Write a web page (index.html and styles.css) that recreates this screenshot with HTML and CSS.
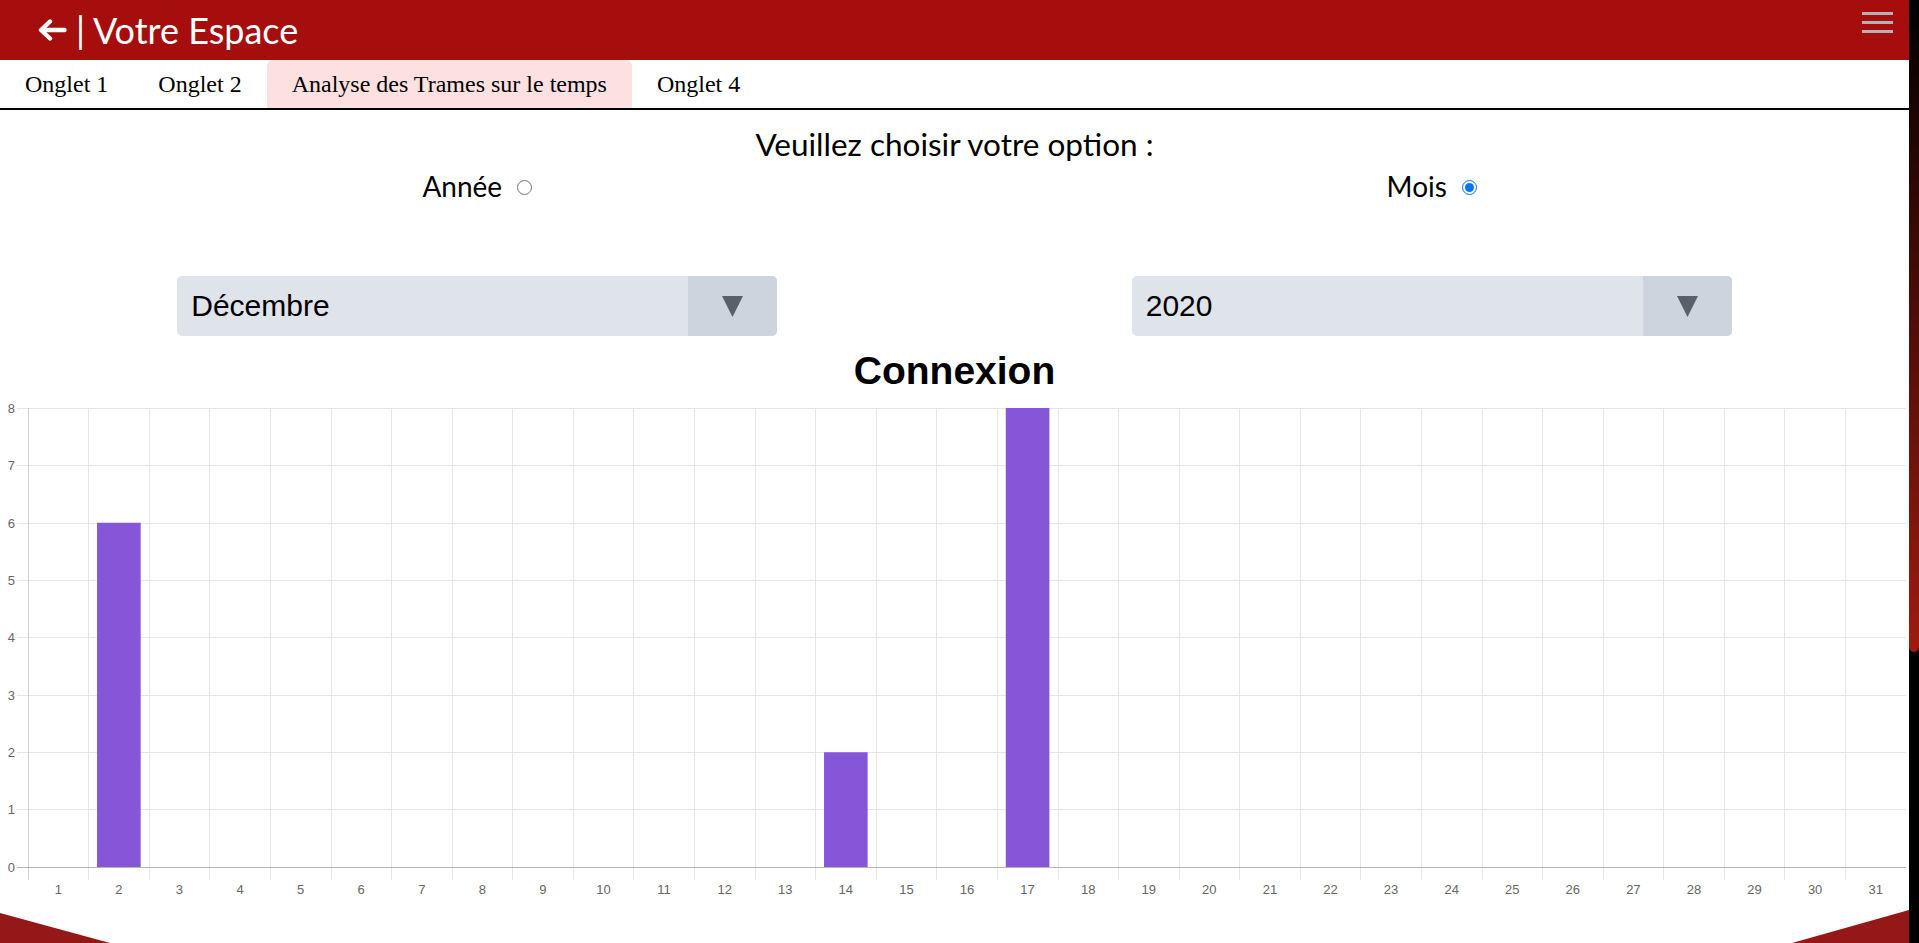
FILE: index.html
```html
<!DOCTYPE html>
<html lang="fr">
<head>
<meta charset="utf-8">
<title>Votre Espace</title>
<link rel="stylesheet" href="styles.css">
</head>
<body>
<div class="app">
  <div class="page">
    <header class="topbar">
      <svg class="back" viewBox="0 0 30 22" aria-hidden="true">
        <path d="M27.5 11H4.5M13 2.5L4 11L13 19.5" fill="none" stroke="#fff" stroke-width="4.4" stroke-linecap="round" stroke-linejoin="round"/>
      </svg>
      <span class="brand">| Votre Espace</span>
      <div class="menu"><span></span><span></span><span></span></div>
    </header>

    <nav class="tabs">
      <div class="tab">Onglet 1</div>
      <div class="tab">Onglet 2</div>
      <div class="tab active">Analyse des Trames sur le temps</div>
      <div class="tab">Onglet 4</div>
    </nav>

    <section class="options">
      <h2 class="prompt">Veuillez choisir votre option :</h2>
      <div class="choices">
        <label class="choice">Année <input type="radio" name="mode"></label>
        <label class="choice">Mois <input type="radio" name="mode" checked></label>
      </div>
      <div class="selects">
        <div class="select-cell">
          <div class="select">
            <div class="select-value">Décembre</div>
            <div class="select-arrow"><svg viewBox="0 0 21 21" class="tri"><polygon points="0,0 21,0 10.5,21" fill="#5a606b"/></svg></div>
          </div>
        </div>
        <div class="select-cell">
          <div class="select">
            <div class="select-value">2020</div>
            <div class="select-arrow"><svg viewBox="0 0 21 21" class="tri"><polygon points="0,0 21,0 10.5,21" fill="#5a606b"/></svg></div>
          </div>
        </div>
      </div>
    </section>

    <section class="chart">
      <svg class="chart-svg" width="1909" height="570" viewBox="0 0 1909 570">
        <text class="chart-title" x="954.5" y="48" text-anchor="middle">Connexion</text>
        <g class="grid-v" stroke="#e6e6e6" stroke-width="1">
          <line x1="88.5" y1="72" x2="88.5" y2="544"/>
          <line x1="149.5" y1="72" x2="149.5" y2="544"/>
          <line x1="209.5" y1="72" x2="209.5" y2="544"/>
          <line x1="270.5" y1="72" x2="270.5" y2="544"/>
          <line x1="331.5" y1="72" x2="331.5" y2="544"/>
          <line x1="391.5" y1="72" x2="391.5" y2="544"/>
          <line x1="452.5" y1="72" x2="452.5" y2="544"/>
          <line x1="512.5" y1="72" x2="512.5" y2="544"/>
          <line x1="573.5" y1="72" x2="573.5" y2="544"/>
          <line x1="633.5" y1="72" x2="633.5" y2="544"/>
          <line x1="694.5" y1="72" x2="694.5" y2="544"/>
          <line x1="755.5" y1="72" x2="755.5" y2="544"/>
          <line x1="815.5" y1="72" x2="815.5" y2="544"/>
          <line x1="876.5" y1="72" x2="876.5" y2="544"/>
          <line x1="936.5" y1="72" x2="936.5" y2="544"/>
          <line x1="997.5" y1="72" x2="997.5" y2="544"/>
          <line x1="1058.5" y1="72" x2="1058.5" y2="544"/>
          <line x1="1118.5" y1="72" x2="1118.5" y2="544"/>
          <line x1="1179.5" y1="72" x2="1179.5" y2="544"/>
          <line x1="1239.5" y1="72" x2="1239.5" y2="544"/>
          <line x1="1300.5" y1="72" x2="1300.5" y2="544"/>
          <line x1="1360.5" y1="72" x2="1360.5" y2="544"/>
          <line x1="1421.5" y1="72" x2="1421.5" y2="544"/>
          <line x1="1482.5" y1="72" x2="1482.5" y2="544"/>
          <line x1="1542.5" y1="72" x2="1542.5" y2="544"/>
          <line x1="1603.5" y1="72" x2="1603.5" y2="544"/>
          <line x1="1663.5" y1="72" x2="1663.5" y2="544"/>
          <line x1="1724.5" y1="72" x2="1724.5" y2="544"/>
          <line x1="1784.5" y1="72" x2="1784.5" y2="544"/>
          <line x1="1845.5" y1="72" x2="1845.5" y2="544"/>
        </g>
        <g class="grid-h" stroke="#e6e6e6" stroke-width="1">
          <line x1="17" y1="72.5" x2="1906" y2="72.5"/>
          <line x1="17" y1="129.5" x2="1906" y2="129.5"/>
          <line x1="17" y1="187.5" x2="1906" y2="187.5"/>
          <line x1="17" y1="244.5" x2="1906" y2="244.5"/>
          <line x1="17" y1="301.5" x2="1906" y2="301.5"/>
          <line x1="17" y1="359.5" x2="1906" y2="359.5"/>
          <line x1="17" y1="416.5" x2="1906" y2="416.5"/>
          <line x1="17" y1="473.5" x2="1906" y2="473.5"/>
        </g>
        <line x1="28.5" y1="72" x2="28.5" y2="544" stroke="#cfcfcf" stroke-width="1"/>
        <line x1="17" y1="531.5" x2="1906" y2="531.5" stroke="#b5b5b5" stroke-width="1"/>
        <g class="bars" fill="#8656d9">
          <rect x="97.06" y="186.75" width="43.62" height="344.25"/>
          <rect x="824.03" y="416.25" width="43.62" height="114.75"/>
          <rect x="1005.77" y="72" width="43.62" height="459"/>
        </g>
        <g class="ylabels" text-anchor="end">
          <text x="15" y="76.5">8</text>
          <text x="15" y="134">7</text>
          <text x="15" y="191.5">6</text>
          <text x="15" y="248.5">5</text>
          <text x="15" y="306">4</text>
          <text x="15" y="363.5">3</text>
          <text x="15" y="420.5">2</text>
          <text x="15" y="478">1</text>
          <text x="15" y="535.5">0</text>
        </g>
        <g class="xlabels" text-anchor="middle">
          <text x="58.29" y="557.5">1</text>
          <text x="118.87" y="557.5">2</text>
          <text x="179.45" y="557.5">3</text>
          <text x="240.03" y="557.5">4</text>
          <text x="300.61" y="557.5">5</text>
          <text x="361.19" y="557.5">6</text>
          <text x="421.77" y="557.5">7</text>
          <text x="482.35" y="557.5">8</text>
          <text x="542.94" y="557.5">9</text>
          <text x="603.52" y="557.5">10</text>
          <text x="664.10" y="557.5">11</text>
          <text x="724.68" y="557.5">12</text>
          <text x="785.26" y="557.5">13</text>
          <text x="845.84" y="557.5">14</text>
          <text x="906.42" y="557.5">15</text>
          <text x="967.00" y="557.5">16</text>
          <text x="1027.58" y="557.5">17</text>
          <text x="1088.16" y="557.5">18</text>
          <text x="1148.74" y="557.5">19</text>
          <text x="1209.32" y="557.5">20</text>
          <text x="1269.90" y="557.5">21</text>
          <text x="1330.48" y="557.5">22</text>
          <text x="1391.06" y="557.5">23</text>
          <text x="1451.65" y="557.5">24</text>
          <text x="1512.23" y="557.5">25</text>
          <text x="1572.81" y="557.5">26</text>
          <text x="1633.39" y="557.5">27</text>
          <text x="1693.97" y="557.5">28</text>
          <text x="1754.55" y="557.5">29</text>
          <text x="1815.13" y="557.5">30</text>
          <text x="1875.71" y="557.5">31</text>
        </g>
      </svg>
    </section>

    <footer class="deco">
      <svg class="deco-svg" width="1909" height="37" viewBox="0 0 1909 37" aria-hidden="true">
        <polygon points="0,7 110,37 0,37" fill="#951717"/>
        <polygon points="1909,4 1909,37 1792,37" fill="#951717"/>
      </svg>
    </footer>
  </div>
  <div class="scrollbar"><div class="thumb"></div></div>
</div>
</body>
</html>
```

FILE: styles.css
```css
html, body {
  margin: 0;
  padding: 0;
  background: #fff;
  overflow: hidden;
}

.app {
  display: flex;
  width: 1919px;
  height: 943px;
}

.page {
  flex: 1;
  min-width: 0;
  display: flex;
  flex-direction: column;
}

/* Header */
.topbar {
  height: 60px;
  flex: none;
  background: #a60e0e;
  display: flex;
  align-items: center;
  padding: 0 16px 0 37px;
  color: #fff;
}

.back {
  width: 30px;
  height: 22px;
  flex: none;
}

.brand {
  margin-left: 9px;
  font-family: Lato, "Open Sans", sans-serif;
  font-size: 36px;
  line-height: normal;
  color: #fff;
}

.menu {
  margin-left: auto;
  align-self: flex-start;
  margin-top: 12px;
  width: 31px;
  display: flex;
  flex-direction: column;
  gap: 6.5px;
}

.menu span {
  display: block;
  height: 2.5px;
  background: #b3b3b3;
}

/* Tabs */
.tabs {
  display: flex;
  height: 48px;
  flex: none;
  border-bottom: 2px solid #000;
  font-family: "Liberation Serif", "Times New Roman", serif;
  font-size: 24px;
}

.tab {
  padding: 0 25px;
  line-height: 48px;
  color: #000;
  white-space: nowrap;
}

.tab.active {
  background: #fde1e1;
  border-radius: 6px 6px 0 0;
}

/* Options */
.options {
  flex: none;
  padding-top: 17px;
  display: flex;
  flex-direction: column;
}

.prompt {
  margin: 0;
  text-align: center;
  font-family: Lato, "Open Sans", sans-serif;
  font-weight: normal;
  font-size: 31.5px;
  line-height: 34px;
  color: #000;
}

.choices {
  display: grid;
  grid-template-columns: 1fr 1fr;
  margin-top: 8px;
  font-family: Lato, "Open Sans", sans-serif;
  font-size: 28px;
  line-height: 34px;
  color: #000;
}

.choice {
  display: flex;
  justify-content: center;
  align-items: center;
}

.choice input {
  width: 15px;
  height: 15px;
  margin: 2px 0 0 15px;
}

.selects {
  display: grid;
  grid-template-columns: 1fr 1fr;
  margin-top: 73px;
}

.select-cell {
  display: flex;
  justify-content: center;
}

.select {
  width: 600px;
  height: 60px;
  display: flex;
  background: #dfe3ea;
  border-radius: 5px;
  overflow: hidden;
}

.select-value {
  flex: 1;
  display: flex;
  align-items: center;
  padding-left: 14px;
  font-family: "Liberation Sans", Arial, sans-serif;
  font-size: 30px;
  color: #000;
}

.select-arrow {
  width: 89px;
  flex: none;
  background: #cdd4dd;
  display: flex;
  align-items: center;
  justify-content: center;
}

.tri {
  width: 21px;
  height: 21px;
  display: block;
}

/* Chart */
.chart {
  flex: none;
  height: 570px;
}

.chart-svg {
  display: block;
}

.chart-title {
  font-family: "Liberation Sans", Arial, sans-serif;
  font-weight: bold;
  font-size: 39px;
  fill: #000;
}

.ylabels text,
.xlabels text {
  font-family: "Liberation Sans", Arial, sans-serif;
  font-size: 13px;
  fill: #666;
}

/* Footer decoration */
.deco {
  flex: none;
  height: 37px;
}

.deco-svg {
  display: block;
}

/* Fake scrollbar */
.scrollbar {
  width: 10px;
  flex: none;
  background: #000;
}

.thumb {
  height: 652px;
  background: linear-gradient(#000, #9e1b10);
  border-radius: 0 0 5px 5px;
}
```
